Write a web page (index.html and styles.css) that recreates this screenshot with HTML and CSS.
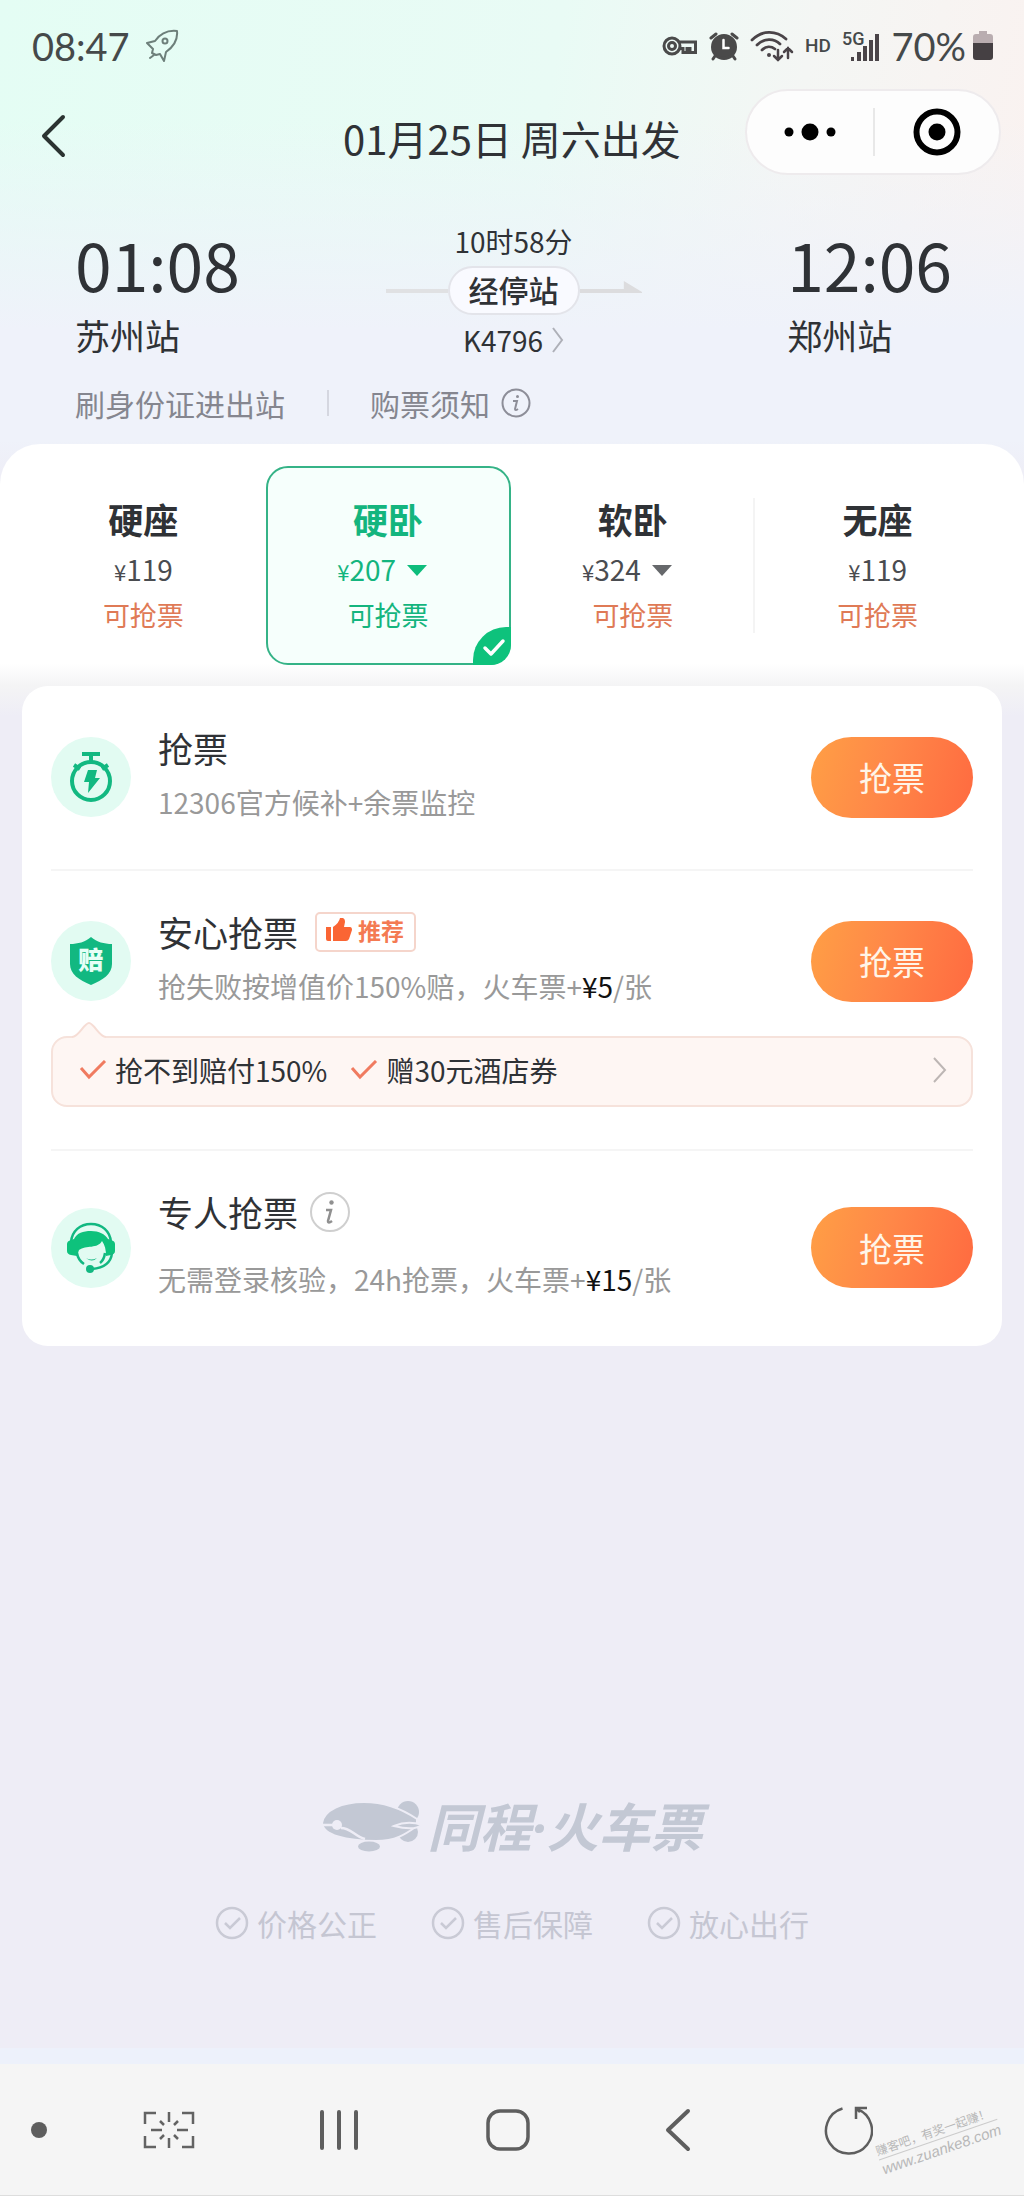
FILE: index.html
```html
<!DOCTYPE html>
<html lang="zh-CN">
<head>
<meta charset="utf-8">
<meta name="viewport" content="width=device-width, initial-scale=1">
<title>01月25日 周六出发</title>
<link rel="stylesheet" href="styles.css">
</head>
<body>
<div class="page">
  <div class="status">
    <span class="status-text">08:47</span>
    <svg class="rocket" width="34" height="34" viewBox="0 0 34 34" fill="none" stroke="#6d7f7a" stroke-width="2" stroke-linejoin="round" stroke-linecap="round"><path d="M32 2C23 1 15 5 10 12L2 14l6 6-1 4 4 2 4-1 4 7 2-9c7-5 12-12 11-21ZM9 26l-4 3"/><circle cx="20" cy="12" r="2.5"/></svg>
    <div class="status-icons">
      <svg width="36" height="24" viewBox="0 0 36 24" fill="none" stroke="#4a4a4a" stroke-width="3"><path d="M17 8H33.500V18.500H28V14.500H25V18.500H21V14.500H17"/><circle cx="10" cy="12" r="8"/><circle cx="10" cy="12" r="3.500"/></svg>
      <svg width="30" height="30" viewBox="0 0 30 30" fill="none" stroke="#4a4a4a" stroke-width="3" stroke-linecap="round"><circle cx="15" cy="16" r="11.500" fill="#4a4a4a"/><path d="M2 7l5-4M28 7l-5-4M6 25l-2 3M24 25l2 3"/><path d="M14.500 9v8h5" stroke="#fff" stroke-width="2.500"/></svg>
      <svg width="44" height="34" viewBox="0 0 44 34" fill="none" stroke="#4a4448" stroke-width="2.800" stroke-linecap="round"><path d="M2 11C12 1 26 1 36 10M7 16C14 9 24 9 30 15M12 21c4-4 9-4 13-1"/><circle cx="19" cy="26" r="2" fill="#4a4448" stroke="none"/><path d="M28 21v10m-4-4 4 4 4-4M38 29V19m-4 4 4-4 4 4" stroke-width="2.500"/></svg>
      <span class="hd">HD</span>
      <span class="signal"><span class="net">5G</span><svg width="30" height="28" viewBox="0 0 30 28" fill="#4a4448"><path d="M1 23h3v4H1zM7 18h4v9H7zM13 12h4v15h-4zM19 6h4v21h-4zM25 0h4v27h-4z"/></svg></span>
      <span class="status-text">70%</span>
      <svg class="battery" width="20" height="30" viewBox="0 0 20 30"><path d="M6 3V0h8v3h3q3 0 3 3v7H0V6q0-3 3-3Z" fill="#b9adb0"/><path d="M0 12h20v14q0 3-3 3H3q-3 0-3-3Z" fill="#454043"/></svg>
    </div>
  </div>

  <header class="header">
    <button class="back" aria-label="返回"><svg width="26" height="44" viewBox="0 0 26 44" fill="none" stroke="#2b3331" stroke-width="4" stroke-linecap="round" stroke-linejoin="round"><path d="M22 3 3 22 22 41"/></svg></button>
    <h1 class="title">01月25日 周六出发</h1>
    <div class="capsule">
      <button class="capsule-button" aria-label="更多"><svg width="52" height="18" viewBox="0 0 52 18"><circle cx="5" cy="9" r="4.500"/><circle cx="26" cy="9" r="8.500"/><circle cx="47" cy="9" r="4.500"/></svg></button>
      <button class="capsule-button capsule-close" aria-label="关闭"><svg width="48" height="48" viewBox="0 0 48 48"><circle cx="24" cy="24" r="20.500" fill="none" stroke="#000" stroke-width="6"/><circle cx="24" cy="24" r="8.500"/></svg></button>
    </div>
  </header>

  <section class="trip">
    <div class="route">
      <div class="stop"><span class="time">01:08</span><span class="station">苏州站</span></div>
      <div class="middle">
        <span class="small">10时58分</span>
        <div class="track">
          <span class="line"></span>
          <button class="via">经停站</button>
          <svg class="arrow" height="14" viewBox="0 0 58 14" preserveAspectRatio="none"><path d="M0 9h41V1l17 11v1H0Z" fill="#dcdcde"/></svg>
        </div>
        <a class="small train" href="#train">K4796<svg width="13" height="26" viewBox="0 0 13 26" fill="none" stroke="#aeb0b8" stroke-width="2"><path d="M2 1 11 13 2 25"/></svg></a>
      </div>
      <div class="stop"><span class="time">12:06</span><span class="station">郑州站</span></div>
    </div>
    <div class="notes">
      <span>刷身份证进出站</span>
      <a class="rules" href="#rules">购票须知<svg width="30" height="30" viewBox="0 0 30 30" fill="none" stroke="#8d8e98" stroke-width="2"><circle cx="15" cy="15" r="13.500"/><circle cx="16.500" cy="8.500" r="1.500" fill="#8d8e98" stroke="none"/><path d="M12 13h4l-2 8q0 2 3 0"/></svg></a>
    </div>
  </section>

  <section class="seats">
    <button class="seat"><span class="seat-name">硬座</span><span class="price"><span><small>¥</small>119</span></span><span class="seat-state">可抢票</span></button>
    <button class="seat selected" aria-pressed="true"><span class="seat-name">硬卧</span><span class="price has-more"><span><small>¥</small>207</span><i class="caret"></i></span><span class="seat-state">可抢票</span>
      <svg class="tick" width="39" height="39" viewBox="0 0 39 39"><path d="M1 39V34A33 33 0 0 1 34 1H39V19A20 20 0 0 1 19 39Z" fill="#0ec27c"/><path d="m13 22 6 6 12-13" fill="none" stroke="#fff" stroke-width="3.500" stroke-linecap="round" stroke-linejoin="round"/></svg></button>
    <button class="seat"><span class="seat-name">软卧</span><span class="price has-more"><span><small>¥</small>324</span><i class="caret"></i></span><span class="seat-state">可抢票</span></button>
    <button class="seat divided"><span class="seat-name">无座</span><span class="price"><span><small>¥</small>119</span></span><span class="seat-state">可抢票</span></button>
  </section>

  <main class="list">
    <div class="offers">
      <section class="offer">
        <div class="offer-row">
          <span class="badge"><svg width="44" height="52" viewBox="0 0 44 52" fill="none" stroke="#12b881" stroke-width="4"><circle cx="22" cy="30" r="19"/><path d="M13 3h18M22 3v8M5 14l6 4M39 14l-6 4"/><path d="M19 19h9l-2 8h5L19 42l1-11h-5Z" fill="#12b881" stroke="none"/></svg></span>
          <div class="offer-text"><h2>抢票</h2><p>12306官方候补+余票监控</p></div>
          <button class="grab">抢票</button>
        </div>
      </section>

      <section class="offer">
        <div class="offer-row">
          <span class="badge"><svg width="44" height="48" viewBox="0 0 44 48"><path d="M22 0C28 5 35 7 43 7V27C43 37 34 43 22 48 10 43 1 37 1 27V7C9 7 16 5 22 0Z" fill="#12b881"/><text x="22" y="32" text-anchor="middle" class="shield-text">赔</text></svg></span>
          <div class="offer-text"><h2>安心抢票<span class="tag"><svg width="26" height="24" viewBox="0 0 26 24" fill="#fa6534"><path d="M0 9h5v14H2Q0 23 0 21ZM7 9q6-4 7-9 5-1 5 4l-1 5h6q2 0 2 3l-3 9q-1 2-3 2H7Z"/></svg>推荐</span></h2><p>抢失败按增值价150%赔，火车票+<b>¥5</b>/张</p></div>
          <button class="grab">抢票</button>
        </div>
        <a class="perks" href="#perks">
          <svg class="perks-tip" width="34" height="17" viewBox="0 0 34 17"><path d="M0 15.500C7 15 12 1 17 1s10 14 17 14.500V17H0Z" fill="#fef6f3"/><path d="M0 15C7 15 12 1 17 1s10 14 17 14" fill="none" stroke="#f6ddd5" stroke-width="2"/></svg>
          <span class="perk"><svg width="28" height="20" viewBox="0 0 28 20" fill="none" stroke="#f07b60" stroke-width="3"><path d="m2 8 8 9L26 1"/></svg>抢不到赔付150%</span>
          <span class="perk"><svg width="28" height="20" viewBox="0 0 28 20" fill="none" stroke="#f07b60" stroke-width="3"><path d="m2 8 8 9L26 1"/></svg>赠30元酒店券</span>
          <svg class="perks-more" width="14" height="26" viewBox="0 0 14 26" fill="none" stroke="#bdb6b4" stroke-width="2"><path d="M1 1 12 13 1 25"/></svg>
        </a>
      </section>

      <section class="offer offer-agent">
        <div class="offer-row">
          <span class="badge"><svg width="50" height="52" viewBox="0 0 50 52"><path d="M5 20C6 9 14 2 25 2s19 7 20 18" fill="none" stroke="#12b881" stroke-width="2.500"/><path d="M1 22q0-3 4-4l3-1C11 11 17 9 25 9s14 3 17 8l3 1q4 1 4 4v7q0 3-4 4l-5 1C40 28 39 23 36 19 32 27 20 23 13 28l-2 6-6-1q-4-1-4-4Z" fill="#0ec27c"/><path d="M11 31q1 7 7 11M39 31q-1 7-5 10M46 31C45 41 37 46 26 47" fill="none" stroke="#12b881" stroke-width="2.500"/><path d="M20 36q5 3 11 0-5 5-11 0Z" fill="#12b881"/><circle cx="24" cy="47" r="4" fill="#12b881"/></svg></span>
          <div class="offer-text"><h2>专人抢票<svg class="info" width="40" height="40" viewBox="0 0 40 40"><circle cx="20" cy="20" r="19" fill="none" stroke="#cfcfcf" stroke-width="2"/><circle cx="21.500" cy="10.500" r="2.200" fill="#909090"/><path d="M16 18h5l-3 11q0 3 4 0" fill="none" stroke="#909090" stroke-width="2.500"/></svg></h2><p>无需登录核验，24h抢票，火车票+<b>¥15</b>/张</p></div>
          <button class="grab">抢票</button>
        </div>
      </section>
    </div>
  </main>

  <footer class="footer">
    <div class="brand">
      <svg width="100" height="52" viewBox="0 0 100 52" fill="#c3c8d4"><circle cx="86" cy="12" r="11"/><circle cx="86" cy="32" r="10"/><path d="M0 23C2 10 20 2 42 2c20 0 38 7 53 17v7C85 33 75 41 54 41 24 41 1 35 0 23Z" stroke="#eeedf6" stroke-width="2"/><path d="M94 18h6v9h-6Z" fill="#eeedf6"/><path d="M72 26q14-6 28-1-8 6-28 1Z" stroke="#eeedf6" stroke-width="2"/><path d="M0 25h12M19 28c10 0 13 8 24 11" fill="none" stroke="#eeedf6" stroke-width="2.500"/><circle cx="15" cy="25" r="5" fill="#eeedf6"/><ellipse cx="47" cy="46.500" rx="11" ry="5"/></svg>
      <span class="brand-name">同程<span class="dot">·</span>火车票</span>
    </div>
    <ul class="promises">
      <li><svg width="34" height="34" viewBox="0 0 34 34" fill="none" stroke="#c9cad5" stroke-width="2.500"><circle cx="17" cy="17" r="15"/><path d="m10 17 5 5 10-10"/></svg>价格公正</li>
      <li><svg width="34" height="34" viewBox="0 0 34 34" fill="none" stroke="#c9cad5" stroke-width="2.500"><circle cx="17" cy="17" r="15"/><path d="m10 17 5 5 10-10"/></svg>售后保障</li>
      <li><svg width="34" height="34" viewBox="0 0 34 34" fill="none" stroke="#c9cad5" stroke-width="2.500"><circle cx="17" cy="17" r="15"/><path d="m10 17 5 5 10-10"/></svg>放心出行</li>
    </ul>
  </footer>

  <nav class="nav">
    <button class="pin" aria-label="固定"><svg width="16" height="16" viewBox="0 0 16 16"><circle cx="8" cy="8" r="8" fill="#5e5e5e"/></svg></button>
    <button aria-label="截屏"><svg width="52" height="38" viewBox="0 0 52 38" fill="none" stroke="#636363" stroke-width="2.500"><path d="M2 13V2h11M39 2h11v11M50 25v11H39M13 36H2V25M26 1v10M26 27v10M8 19h11M34 19h11M17 10l4 4M35 10l-4 4M17 28l4-4M35 28l-4-4"/></svg></button>
    <button aria-label="最近任务"><svg width="38" height="42" viewBox="0 0 38 42" stroke="#5e5e5e" stroke-width="4" stroke-linecap="round"><path d="M2 3v36M19 3v36M36 3v36"/></svg></button>
    <button aria-label="主屏幕"><svg width="44" height="44" viewBox="0 0 44 44" fill="none" stroke="#5e5e5e" stroke-width="3.500"><rect x="2" y="3" width="40" height="38" rx="12"/></svg></button>
    <button aria-label="后退"><svg width="26" height="44" viewBox="0 0 26 44" fill="none" stroke="#5e5e5e" stroke-width="4" stroke-linecap="round" stroke-linejoin="round"><path d="M23 3 3 22 23 41"/></svg></button>
    <button aria-label="刷新"><svg width="50" height="50" viewBox="0 0 50 50" fill="none" stroke="#5e5e5e" stroke-width="2.500"><path d="M19.500 3.500A23 23 0 1 0 34 4"/><path d="M44 3H33v11M33 3l4 4"/></svg></button>
    <div class="watermark"><span>赚客吧，有奖一起赚！</span><span class="watermark-url">www.zuanke8.com</span></div>
  </nav>
</div>
</body>
</html>
```
FILE: styles.css
```css
* { box-sizing: border-box; }

body {
  margin: 0;
  font-family: "Noto Sans CJK SC", "Noto Sans", sans-serif;
  color: #2f3236;
  background: #eeedf6;
}

button {
  padding: 0;
  border: 0;
  background: none;
  font: inherit;
  color: inherit;
}

a { color: inherit; text-decoration: none; }
h1, h2, p, ul { margin: 0; padding: 0; font-weight: 400; }
svg { flex: none; display: block; }

.page {
  display: flex;
  flex-direction: column;
  min-height: 100vh;
  background:
    linear-gradient(180deg, rgba(239, 242, 250, 0) 0, rgba(239, 242, 250, 0) 120px, #eff2fa 330px, #eff2fa 440px, #eeedf6 480px),
    linear-gradient(100deg, #e4fdf4 0%, #e9fbf5 40%, #f4f6f4 58%, #fdf0ee 85%, #fdf2ee 100%);
}

/* Phone status bar */
.status {
  display: flex;
  align-items: center;
  height: 80px;
  padding: 12px 31px 0 32px;
  color: #45494a;
}
.status-text {
  font-family: Lato, sans-serif;
  font-size: 38px;
  line-height: 48px;
}
.rocket { margin-left: 15px; }
.status-icons { display: flex; align-items: center; gap: 11px; margin-left: auto; }
.hd { font: 500 19px/24px Roboto, sans-serif; }
.signal { display: flex; align-items: flex-end; }
.net { font: 500 18px/18px Roboto, sans-serif; align-self: flex-start; margin-right: -14px; }
.signal svg { margin-top: 4px; }
.battery { margin-left: -4px; }

/* Title bar */
.header {
  display: grid;
  grid-template-columns: 1fr auto 1fr;
  align-items: center;
  height: 112px;
  padding: 0 23px;
}
.back { justify-self: start; margin-left: 18px; }
.title { padding-top: 4px; font-size: 40px; line-height: 56px; }
.capsule {
  display: grid;
  grid-template-columns: 1fr 1fr;
  align-items: center;
  align-self: start;
  justify-self: end;
  width: 256px;
  height: 86px;
  margin-top: 9px;
  border: 2px solid #eeebed;
  border-radius: 43px;
  background: #fdfdfd;
}
.capsule-button { display: flex; align-items: center; justify-content: center; height: 48px; }
.capsule-close { border-left: 2px solid #e8e8e8; }

/* Journey summary */
.trip { padding: 31px 72px 21px 75px; }
.route { display: flex; justify-content: space-between; align-items: flex-start; }
.stop { display: flex; flex-direction: column; gap: 8px; }
.time { font-size: 66px; line-height: 80px; }
.station { font-size: 35px; line-height: 48px; }
.middle { display: flex; flex-direction: column; align-items: center; gap: 7px; width: 256px; }
.small { font-size: 28px; line-height: 36px; }
.track { display: flex; align-items: center; width: 100%; }
.line { flex: 1; height: 4px; background: #e0e1e3; }
.via {
  width: 132px;
  height: 49px;
  padding-bottom: 4px;
  border: 2px solid #e3e4ea;
  border-radius: 25px;
  background: #f9faff;
  font-size: 30px;
  font-weight: 500;
  line-height: 40px;
}
.arrow { flex: 1; width: 58px; margin-top: -7px; }
.train { display: flex; align-items: center; gap: 8px; }
.notes { display: flex; margin-top: 24px; font-size: 30px; line-height: 40px; color: #85868f; }
.rules { display: flex; align-items: center; gap: 11px; margin-left: 42px; }
.rules::before { content: ""; width: 2px; height: 26px; margin-right: 30px; background: #d5d7e0; }

/* Seat classes */
.seats {
  display: grid;
  grid-template-columns: repeat(4, 1fr);
  padding: 22px 24px 21px 21px;
  border-radius: 40px 40px 0 0;
  background: linear-gradient(180deg, #fff 0, #fff 220px, #f4f4f5 100%);
}
.seat {
  position: relative;
  display: flex;
  flex-direction: column;
  align-items: center;
  gap: 8px;
  padding: 27px 0 30px;
  border: 2px solid transparent;
  border-radius: 22px;
}
.seat-name { font-size: 35px; font-weight: 700; line-height: 48px; }
.price { display: flex; align-items: center; gap: 11px; font-size: 28px; line-height: 36px; color: #4a4c50; }
.price.has-more { padding-right: 12px; }
.price small { font-size: 22px; }
.caret { border: 10px solid transparent; border-top: 11px solid currentColor; border-bottom: 0; color: #66686b; }
.seat-state { font-size: 27px; line-height: 36px; color: #df7a56; }
.seat.selected { border-color: #35b387; background: #f6fffc; }
.seat.selected span { color: #14b57e; }
.seat.selected .caret { color: #0ebd7c; }
.tick { position: absolute; right: -2px; bottom: -2px; }
.divided::before {
  content: "";
  position: absolute;
  left: -4px;
  top: 30px;
  bottom: 30px;
  width: 2px;
  background: #f4f4f4;
}

/* Ticket offers */
.list { padding: 0 22px; background: linear-gradient(180deg, #f4f4f5 0, #eeedf6 30px); }
.offers { padding: 0 29px; border-radius: 26px; background: #fff; }
.offer { padding: 38px 0 42px; }
.offer:first-child { padding: 38px 0 39px; }
.offer + .offer { border-top: 2px solid #f5f5f5; padding-top: 37px; }
.offer-row { display: flex; align-items: center; }
.badge {
  display: flex;
  align-items: center;
  justify-content: center;
  width: 80px;
  height: 80px;
  border-radius: 50%;
  background: #e2fbf2;
}
.shield-text { font-size: 25px; font-weight: 900; fill: #e6fff7; }
.offer-text { display: flex; flex-direction: column; gap: 10px; flex: 1; margin-left: 27px; padding-bottom: 8px; }
.offer-text h2 { display: flex; align-items: center; font-size: 35px; line-height: 48px; }
.offer-text p { font-size: 28px; line-height: 40px; color: #999; }
.offer-text b { font-weight: 400; color: #111; }
.offer.offer-agent { padding-bottom: 39px; }
.offer-agent .offer-text { gap: 23px; }
.tag {
  display: flex;
  align-items: center;
  gap: 6px;
  height: 40px;
  margin-left: 17px;
  padding: 0 10px 4px 9px;
  border: 2px solid #f5d5cb;
  border-radius: 5px;
  font-size: 23px;
  font-weight: 700;
  line-height: 32px;
  color: #f47a52;
}
.info { margin-left: 12px; }
.grab {
  width: 162px;
  height: 81px;
  border-radius: 41px;
  background: linear-gradient(105deg, #ff9f45 0%, #ff8848 45%, #ff6a40 100%);
  font-size: 33px;
  line-height: 48px;
  color: #fff5e8;
}
.perks {
  position: relative;
  display: flex;
  align-items: center;
  gap: 23px;
  height: 71px;
  margin-top: 22px;
  padding: 0 24px 4px 26px;
  border: 2px solid #f6e2db;
  border-radius: 16px;
  background: #fef6f3;
  font-size: 28px;
  line-height: 40px;
}
.perks-tip { position: absolute; left: 19px; top: -16px; }
.perk { display: flex; align-items: center; gap: 8px; }
.perks-more { margin-left: auto; }

/* Brand footer */
.footer {
  display: flex;
  flex-direction: column;
  align-items: center;
  gap: 46px;
  margin-top: auto;
  padding: 48px 0 105px;
}
.brand { display: flex; align-items: center; gap: 6px; color: #c3c8d4; }
.brand-name { font-size: 52px; font-weight: 700; font-style: italic; line-height: 60px; }
.dot { font-family: "Noto Sans", sans-serif; }
.promises {
  display: flex;
  gap: 54px;
  list-style: none;
  font-size: 30px;
  line-height: 40px;
  color: #c5c6d2;
}
.promises li { display: flex; align-items: center; gap: 8px; }

/* System navigation */
.nav {
  position: relative;
  display: grid;
  grid-template-columns: 84px repeat(5, 1fr) 91px;
  height: 148px;
  border-top: 16px solid #edf1fb;
  border-bottom: 1px solid #ddd;
  background: #f5f5f5;
}
.nav button { display: flex; align-items: center; justify-content: center; }
.nav .pin { padding-right: 6px; }
.watermark {
  position: absolute;
  right: 23px;
  bottom: 35px;
  display: flex;
  flex-direction: column;
  transform: rotate(-19deg);
  font-size: 12px;
  line-height: 18px;
  color: #b8b8b8;
}
.watermark-url {
  border-top: 1px solid #ccc;
  font: italic 15px/20px "Liberation Sans", sans-serif;
}
```
